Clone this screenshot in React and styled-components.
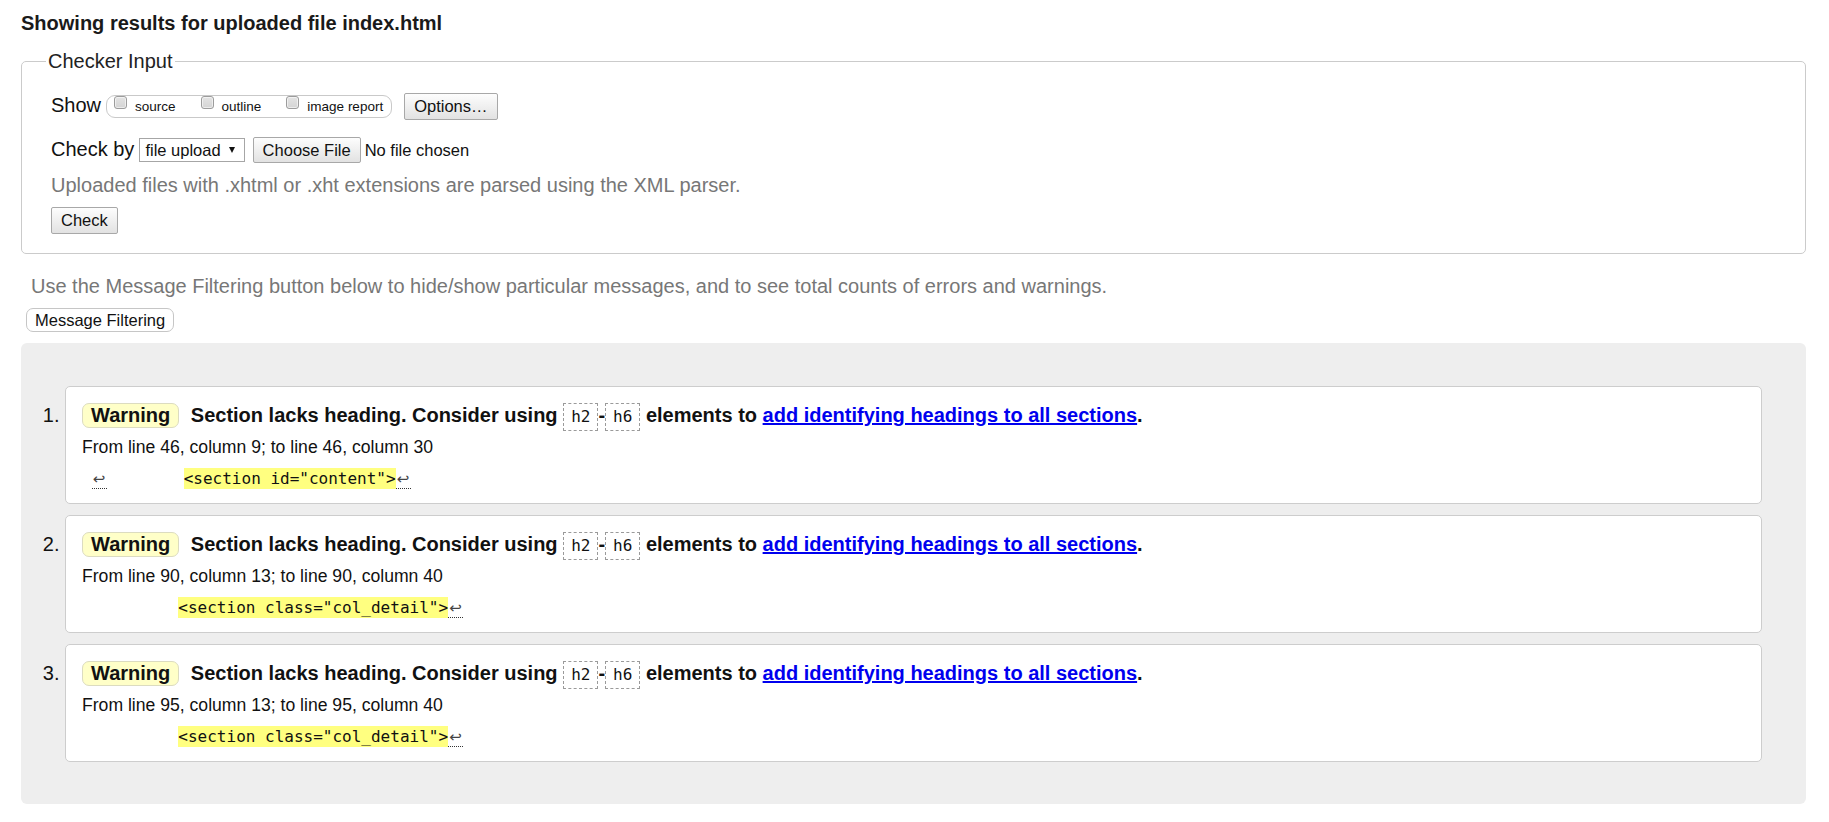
import React from 'react';
import styled, { createGlobalStyle } from 'styled-components';

const GlobalStyle = createGlobalStyle`
  html, body { margin: 0; padding: 0; background: #fff; }
  body {
    font-family: "Liberation Sans", Arial, Helvetica, sans-serif;
    color: #111;
  }
`;

const Page = styled.div`
  padding: 12px 23px 20px 21px;
`;

const Title = styled.h2`
  margin: 0;
  font-size: 20px;
  line-height: 23px;
  font-weight: bold;
  color: #1a1a1a;
`;

const Fieldset = styled.fieldset`
  margin: 15px 0 0;
  padding: 20px 29px 19px;
  border: 1px solid #cbcbcb;
  border-radius: 5px;
  min-width: 0;
`;

const Legend = styled.legend`
  padding: 0 2px;
  margin-left: -5px;
  font-size: 20px;
  line-height: 23px;
  color: #222;
`;

const Row = styled.div`
  display: flex;
  align-items: center;
  height: ${(p) => p.$h}px;
  margin-top: ${(p) => p.$mt || 0}px;
`;

const FieldLabel = styled.span`
  font-size: 20px;
  line-height: 23px;
  margin: 0 ${(p) => p.$gap}px 2px 0;
  color: #111;
`;

const OptionGroup = styled.div`
  box-sizing: border-box;
  height: 23px;
  padding: 0 8px 0 7px;
  border: 1px solid #c9c9c9;
  border-radius: 9px;
  font-size: 13.5px;
  line-height: 21px;
  white-space: nowrap;
  margin-right: 12px;
`;

const OptionItem = styled.label`
  margin-right: 25px;
  color: #111;
  &:last-child { margin-right: 0; }
`;

const Checkbox = styled.span`
  display: inline-block;
  box-sizing: border-box;
  width: 13px;
  height: 13px;
  margin-right: 8px;
  vertical-align: 2px;
  border: 1px solid #9c9c9c;
  border-radius: 3px;
  background: linear-gradient(#e4e4e4, #d4d4d4);
  box-shadow: inset 0 0 0 1px rgba(255, 255, 255, 0.55);
`;

const Button = styled.button`
  box-sizing: border-box;
  height: ${(p) => p.$h || 27}px;
  padding: 0 9px;
  margin: 0;
  font-family: "Liberation Sans", Arial, sans-serif;
  font-size: 16.5px;
  color: #111;
  background: linear-gradient(#fdfdfd, #e2e2e2);
  border: 1px solid #a8a8a8;
  border-radius: 2px;
  white-space: nowrap;
`;

const SelectBox = styled.div`
  box-sizing: border-box;
  display: flex;
  align-items: center;
  gap: 8px;
  height: 24px;
  padding: 0 9px 0 5px;
  margin-right: 8px;
  border: 1px solid #a6a6a6;
  background: #fff;
  font-size: 16.5px;
  color: #111;
`;

const Caret = styled.span`
  width: 0;
  height: 0;
  border-left: 3px solid transparent;
  border-right: 3px solid transparent;
  border-top: 6px solid #111;
`;

const FileName = styled.span`
  margin-left: 4px;
  font-size: 16.5px;
  line-height: 20px;
  color: #111;
`;

const Hint = styled.p`
  margin: 11px 0 0;
  font-size: 20px;
  line-height: 22px;
  color: #777;
`;

const CheckButton = styled(Button)`
  display: block;
  margin-top: 11px;
`;

const Intro = styled.p`
  margin: 21px 0 0 10px;
  font-size: 20px;
  line-height: 23px;
  color: #777;
`;

const FilterButton = styled.button`
  display: block;
  box-sizing: border-box;
  height: 24px;
  margin: 10px 0 0 5px;
  padding: 0 8px;
  font-family: "Liberation Sans", Arial, sans-serif;
  font-size: 16.5px;
  color: #111;
  background: #fff;
  border: 1px solid #c6c6c6;
  border-radius: 7px;
`;

const Panel = styled.ol`
  list-style: none;
  margin: 11px 0 0;
  padding: 43px 44px 42px 0;
  background: #eee;
  border-radius: 6px;
  display: flex;
  flex-direction: column;
  gap: 11px;
`;

const Item = styled.li`
  display: grid;
  grid-template-columns: 44px 1fr;
`;

const Num = styled.span`
  text-align: right;
  padding: 15px 5.5px 0 0;
  font-size: 20px;
  line-height: 28px;
  color: #111;
`;

const Card = styled.div`
  background: #fff;
  border: 1px solid #cdcdcd;
  border-radius: 5px;
  padding: 14px 16px;
`;

const MessageLine = styled.p`
  margin: 0;
  height: 28px;
  font-size: 20px;
  font-weight: bold;
  line-height: 28px;
  white-space: nowrap;
  color: #111;
`;

const Badge = styled.span`
  display: inline-block;
  line-height: 23px;
  padding: 0 8px;
  margin-right: 6px;
  border: 1px solid #dcdcc0;
  border-radius: 7px;
  background: #ffffc8;
`;

const TagCode = styled.code`
  display: inline-block;
  font-family: "DejaVu Sans Mono", "Liberation Mono", monospace;
  font-size: 16px;
  font-weight: normal;
  line-height: 18px;
  padding: 4px 7px;
  border: 1px dashed #9a9a9a;
  color: #111;
`;

const DocLink = styled.a`
  color: #0000ee;
  text-decoration: underline;
`;

const Location = styled.p`
  margin: 7px 0 0;
  height: 22px;
  font-size: 17.6px;
  line-height: 22px;
  color: #111;
`;

const Extract = styled.p`
  margin: 11px 0 0;
  height: 20px;
  font-family: "DejaVu Sans Mono", "Liberation Mono", monospace;
  font-size: 16px;
  line-height: 20px;
  white-space: pre;
  color: #111;
`;

const Mark = styled.mark`
  background: #ffff80;
  color: #111;
  padding: 1px 0;
`;

const Return = styled.span`
  display: inline-block;
  width: 15px;
  text-align: center;
  font-family: "DejaVu Sans", sans-serif;
  font-size: 15px;
  line-height: 17px;
  color: #444;
  border-bottom: 1px dotted #333;
`;

const messages = [
  {
    from: 'From line 46, column 9; to line 46, column 30',
    lead: true,
    pad: '        ',
    code: '<section id="content">',
  },
  {
    from: 'From line 90, column 13; to line 90, column 40',
    lead: false,
    pad: '          ',
    code: '<section class="col_detail">',
  },
  {
    from: 'From line 95, column 13; to line 95, column 40',
    lead: false,
    pad: '          ',
    code: '<section class="col_detail">',
  },
];

export default function App() {
  return (
    <>
      <GlobalStyle />
      <Page>
        <Title>Showing results for uploaded file index.html</Title>
        <Fieldset>
          <Legend>Checker Input</Legend>
          <Row $h={27}>
            <FieldLabel $gap={5}>Show</FieldLabel>
            <OptionGroup>
              <OptionItem><Checkbox />source</OptionItem>
              <OptionItem><Checkbox />outline</OptionItem>
              <OptionItem><Checkbox />image report</OptionItem>
            </OptionGroup>
            <Button>Options…</Button>
          </Row>
          <Row $h={26} $mt={17}>
            <FieldLabel $gap={5}>Check by</FieldLabel>
            <SelectBox>
              <span>file upload</span>
              <Caret />
            </SelectBox>
            <Button $h={26}>Choose File</Button>
            <FileName>No file chosen</FileName>
          </Row>
          <Hint>Uploaded files with .xhtml or .xht extensions are parsed using the XML parser.</Hint>
          <CheckButton>Check</CheckButton>
        </Fieldset>
        <Intro>
          Use the Message Filtering button below to hide/show particular messages, and to see total counts of errors and warnings.
        </Intro>
        <FilterButton>Message Filtering</FilterButton>
        <Panel>
          {messages.map((m, i) => (
            <Item key={i}>
              <Num>{i + 1}.</Num>
              <Card>
                <MessageLine>
                  <Badge>Warning</Badge>{' '}
                  Section lacks heading. Consider using{' '}
                  <TagCode>h2</TagCode>-<TagCode>h6</TagCode>{' '}
                  elements to{' '}
                  <DocLink href="#">add identifying headings to all sections</DocLink>.
                </MessageLine>
                <Location>{m.from}</Location>
                <Extract>
                  {m.lead ? ' ' : ''}
                  {m.lead ? <Return>↩</Return> : null}
                  {m.pad}
                  <Mark>{m.code}</Mark>
                  <Return>↩</Return>
                </Extract>
              </Card>
            </Item>
          ))}
        </Panel>
      </Page>
    </>
  );
}
